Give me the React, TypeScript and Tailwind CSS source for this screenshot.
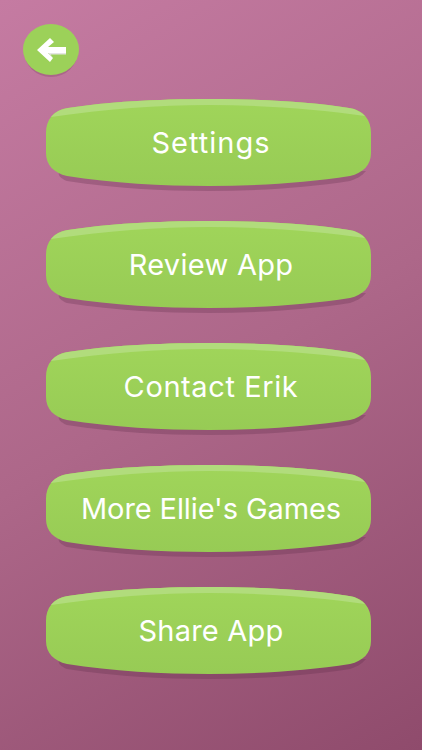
const items = [
  { label: 'Settings', tracking: 'tracking-[1px]' },
  { label: 'Review App', tracking: 'tracking-[0.3px]' },
  { label: 'Contact Erik', tracking: 'tracking-[0.6px]' },
  { label: "More Ellie's Games", tracking: 'tracking-[-0.1px]' },
  { label: 'Share App', tracking: 'tracking-[0.2px]' },
];

function MenuButton({ label, tracking }: { label: string; tracking: string }) {
  return (
    <button className="relative flex h-[92px] w-[325px] items-center justify-center text-[29px] text-white">
      <svg className="absolute inset-0" width="325" height="92" viewBox="0 0 325 92">
        <defs>
          <linearGradient id="btn" x1="0" y1="0" x2="0" y2="1">
            <stop offset="0" stopColor="#a0d55a" />
            <stop offset="1" stopColor="#97cb55" />
          </linearGradient>
        </defs>
        <path d="M21 82C66 89 116 92 163 92S260 89 304 82C310 80 316 77 320 72L14 72C10 76 16 80 21 82Z" fill="#5e2a48" opacity="0.28" />
        <path d="M22 9C60 3 110 0 163 0S266 3 303 9C318 11 325 21 325 34V54C325 66 317 74 304 77C260 84 210 87 163 87S66 84 21 77C8 74 0 66 0 54V34C0 21 7 11 22 9Z" fill="url(#btn)" />
        <path d="M22 9C60 3 110 0 163 0S266 3 303 9C310 10 315 13 319 17C270 10 215 6 163 6S60 10 5 18C9 13 15 10 22 9Z" fill="#b1dc7c" />
      </svg>
      <span className={`relative -mt-[5px] pl-[5px] ${tracking}`}>{label}</span>
    </button>
  );
}

export default function App() {
  return (
    <div className="flex h-[750px] w-[422px] flex-col overflow-hidden bg-[linear-gradient(150deg,#c57ba2_0%,#ad6789_50%,#8f4b6c_100%)] font-['Inter',sans-serif]">
      <button className="relative ml-[23px] mt-[24px] h-[54px] w-[56px]">
        <svg className="absolute inset-0" width="56" height="54" viewBox="0 0 56 54">
          <ellipse cx="28" cy="27" rx="27" ry="26" fill="#5e2a48" opacity="0.22" />
          <ellipse cx="28" cy="25.5" rx="28" ry="25.5" fill="#9cd159" />
          <path d="M14 26L27 14L31 18L25 23H43V29H25L30 34L27 38Z" fill="#ffffff" />
          <path d="M19 30.5L27 38L30 34L25 29H43V30.5H27.5L30 34L27 38Z" fill="#e4e4e4" />
        </svg>
      </button>
      <div className="ml-[46px] mt-[21px] flex flex-col gap-[30px]">
        {items.map((item) => (
          <MenuButton key={item.label} label={item.label} tracking={item.tracking} />
        ))}
      </div>
    </div>
  );
}
